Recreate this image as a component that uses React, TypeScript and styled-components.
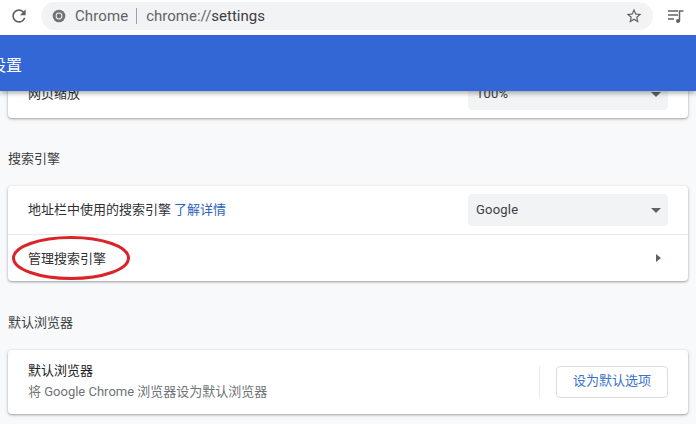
import React from "react";
import styled, { createGlobalStyle } from "styled-components";

const Global = createGlobalStyle`
  html, body { margin: 0; padding: 0; background: #f8f9fa; }
  body { width: 696px; height: 424px; overflow: hidden; font-family: Roboto, "Noto Sans CJK SC", sans-serif; }
`;
const Page = styled.div`width: 696px; height: 424px; overflow: hidden; background: #f8f9fa;`;
const Toolbar = styled.div`
  height: 35px; background: #fff; display: flex; align-items: flex-start; box-sizing: border-box; padding: 2px 0 0 9px; position: relative; z-index: 3;
`;
const IconSlot = styled.div<{ $w: number; $gap?: number }>`
  width: ${(p) => p.$w}px; height: 28px; display: flex; align-items: center; justify-content: center; flex: none; margin-left: ${(p) => p.$gap ?? 0}px;
`;
const Omnibox = styled.div`
  width: 612px; height: 28px; margin-left: 12px; background: #f1f3f4; border-radius: 14px; display: flex; align-items: center; padding: 0 10px 0 11px; box-sizing: border-box; font-size: 15px; flex: none;
`;
const Origin = styled.span`color: #5f6368; margin-left: 9px; letter-spacing: 0.1px;`;
const Sep = styled.span`width: 1px; height: 16px; background: #9aa0a6; margin: 0 9px 0 8px;`;
const Scheme = styled.span`color: #5f6368;`;
const Host = styled.span`color: #3c4043; flex: 1;`;
const Header = styled.header`
  height: 56px; background: #3367d6; color: #fff; display: flex; align-items: center; position: relative; z-index: 2;
  box-shadow: 0 2px 5px rgba(0,0,0,.35); overflow: hidden;
`;
const Title = styled.h1`
  margin: 2px 0 0 -10px; font: 400 16px "Noto Sans CJK SC", sans-serif; white-space: nowrap;
`;
const Content = styled.main`
  padding: 0 8px; font-family: Roboto, "Noto Sans CJK SC", sans-serif; font-size: 13px; color: #202124;
`;
const Card = styled.section<{ $under?: boolean }>`
  background: #fff; border-radius: 4px; margin-top: ${(p) => (p.$under ? "-21px" : "0")};
  box-shadow: 0 1px 2px rgba(60,64,67,.35), 0 1px 3px 1px rgba(60,64,67,.12);
`;
const Row = styled.div<{ $h: number; $divider?: boolean }>`
  height: ${(p) => p.$h}px; display: flex; align-items: center; padding: 0 20px; box-sizing: border-box; position: relative;
  ${(p) => (p.$divider ? "border-top: 1px solid #e8eaed;" : "")}
`;
const Label = styled.div<{ $lift: number }>`flex: 1; color: #303134; white-space: nowrap; padding-bottom: ${(p) => p.$lift}px;`;
const Link = styled.a`color: #2f63b8; margin-left: 3px;`;
const Select = styled.div`
  width: 200px; height: 32px; background: #f1f3f4; border-radius: 4px; display: flex; align-items: center; justify-content: space-between; padding: 0 7px 2px 8px; box-sizing: border-box; color: #3c4043; font-size: 13px; letter-spacing: .2px;
`;
const Caret = styled.span`
  width: 0; height: 0; border-left: 5px solid transparent; border-right: 5px solid transparent; border-top: 5px solid #5f6368; margin-top: 2px;
`;
const Arrow = styled.span`
  width: 0; height: 0; border-top: 4px solid transparent; border-bottom: 4px solid transparent; border-left: 5px solid #5f6368; margin-right: 7px;
`;
const SectionTitle = styled.h2<{ $top: number; $bottom: number }>`
  margin: ${(p) => p.$top}px 0 ${(p) => p.$bottom}px; font-size: 13px; font-weight: 400; line-height: 20px; color: #3c4043;
`;
const Ring = styled.svg`position: absolute; left: 4px; top: 1px; pointer-events: none;`;
const Stack = styled.div`flex: 1; display: flex; flex-direction: column; gap: 3px; line-height: 18px; white-space: nowrap; padding-bottom: 1px;`;
const Sub = styled.div`color: #6f7377;`;
const VLine = styled.span`width: 1px; height: 32px; background: #e8eaed; margin-right: 16px;`;
const Button = styled.button`
  width: 112px; height: 32px; background: #fff; border: 1px solid #dadce0; border-radius: 4px; color: #3a72c9; font: 400 13px/18px "Noto Sans CJK SC", sans-serif; padding: 0 0 5px;
`;

export default function App() {
  return (
    <Page>
      <Global />
      <Toolbar>
        <IconSlot $w={20}>
          <svg width="20" height="20" viewBox="0 0 24 24" fill="#5f6368"><path d="M17.65 6.35A7.958 7.958 0 0012 4c-4.42 0-7.99 3.58-7.99 8s3.57 8 7.99 8c3.73 0 6.84-2.55 7.73-6h-2.08A5.99 5.99 0 0112 18c-3.31 0-6-2.69-6-6s2.69-6 6-6c1.66 0 3.14.69 4.22 1.78L13 11h7V4l-2.35 2.35z" /></svg>
        </IconSlot>
        <Omnibox>
          <svg width="14" height="14" viewBox="0 0 14 14"><circle cx="7" cy="7" r="6.3" fill="#6f7377" /><circle cx="7" cy="7" r="3.4" fill="#f1f3f4" /><circle cx="7" cy="7" r="2.4" fill="#6f7377" /></svg>
          <Origin>Chrome</Origin>
          <Sep />
          <Scheme>chrome://</Scheme>
          <Host>settings</Host>
          <svg width="18" height="18" viewBox="0 0 24 24" fill="#5f6368"><path d="M22 9.24l-7.19-.62L12 2 9.19 8.63 2 9.24l5.46 4.73L5.82 21 12 17.27 18.18 21l-1.63-7.03L22 9.24zM12 15.4l-3.76 2.27 1-4.28-3.32-2.88 4.38-.38L12 6.1l1.71 4.04 4.38.38-3.32 2.88 1 4.28L12 15.4z" /></svg>
        </Omnibox>
        <IconSlot $w={20} $gap={13}>
          <svg width="18" height="16" viewBox="0 0 18 16" fill="none" stroke="#5f6368" strokeWidth="1.3"><path d="M1 3h10M1 7h10M1 11h6" /><path d="M12.5 13V3h4" strokeWidth="1.5" /><circle cx="11" cy="13" r="2" fill="#5f6368" stroke="none" /></svg>
        </IconSlot>
      </Toolbar>
      <Header><Title>设置</Title></Header>
      <Content>
        <Card $under>
          <Row $h={48}>
            <Label $lift={4}>网页缩放</Label>
            <Select>100%<Caret /></Select>
          </Row>
        </Card>
        <SectionTitle $top={31} $bottom={17}>搜索引擎</SectionTitle>
        <Card>
          <Row $h={48}>
            <Label $lift={4}>地址栏中使用的搜索引擎<Link>了解详情</Link></Label>
            <Select>Google<Caret /></Select>
          </Row>
          <Row $h={47} $divider>
            <Label $lift={2}>管理搜索引擎</Label>
            <Arrow />
            <Ring width="120" height="46" viewBox="0 0 120 46"><ellipse cx="59" cy="22" rx="57.5" ry="20.5" fill="none" stroke="#d9252a" strokeWidth="3" /></Ring>
          </Row>
        </Card>
        <SectionTitle $top={32} $bottom={17}>默认浏览器</SectionTitle>
        <Card>
          <Row $h={64}>
            <Stack>
              <div>默认浏览器</div>
              <Sub>将 Google Chrome 浏览器设为默认浏览器</Sub>
            </Stack>
            <VLine />
            <Button>设为默认选项</Button>
          </Row>
        </Card>
      </Content>
    </Page>
  );
}
